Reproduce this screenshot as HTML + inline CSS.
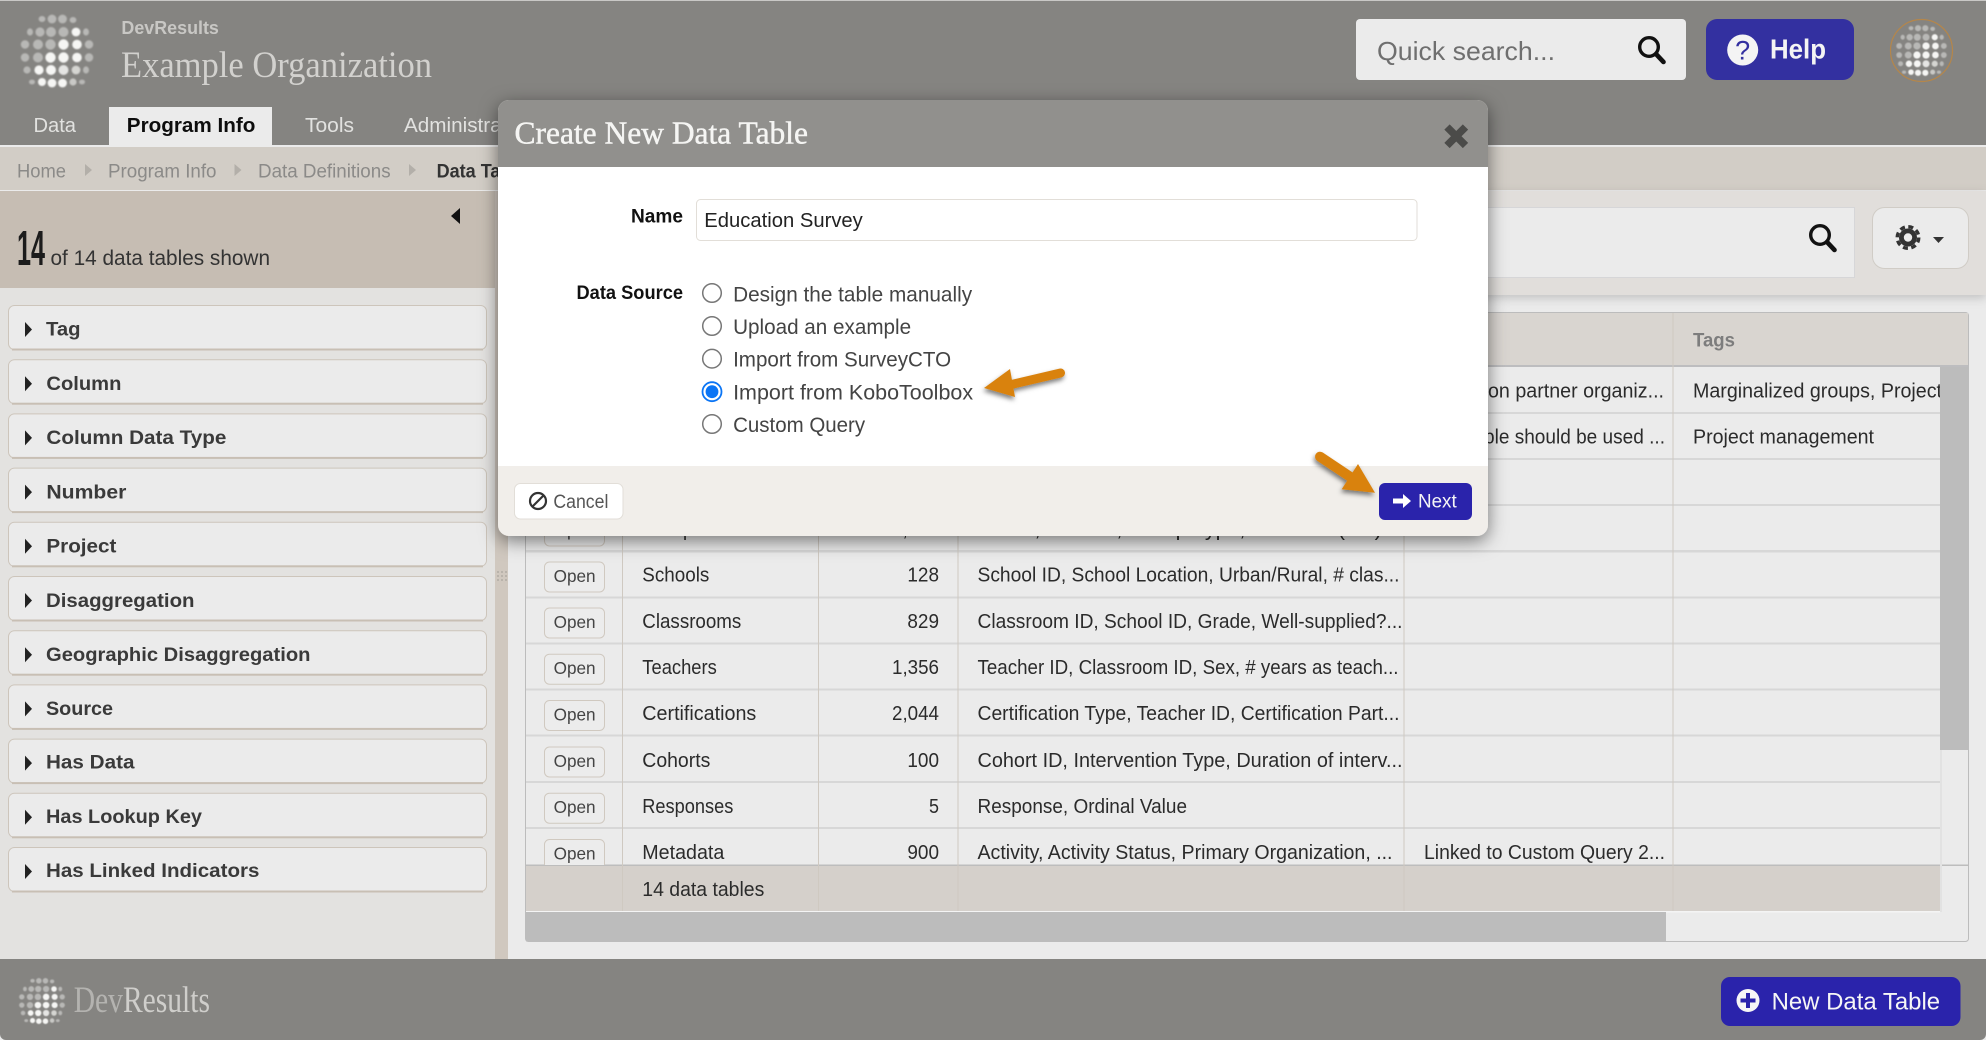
<!DOCTYPE html>
<html lang="en"><head><meta charset="utf-8"><title>Create New Data Table</title>
<style>
html,body{margin:0;padding:0;background:#ebebeb;width:1986px;height:1040px;overflow:hidden}
svg{display:block;position:absolute;left:0;top:0}
text{font-family:"Liberation Sans",Arial,sans-serif;white-space:pre}
.c{font-size:20px;fill:#2b2b2b}
.f{font-size:19.5px;font-weight:700;fill:#3a3a3a}
.o{font-size:17.5px;fill:#444}
.s{font-family:"Liberation Serif",serif}
.r{font-size:21px;fill:#444}
.b{font-size:19px;fill:#8b8a88}
.t{font-size:20px;fill:#e2e2e0}
</style></head><body>
<svg width="1986" height="1040" viewBox="0 0 1986 1040" xmlns="http://www.w3.org/2000/svg">
<defs>
<filter id="ms" x="-10%" y="-15%" width="120%" height="135%"><feDropShadow dx="0" dy="5" stdDeviation="9" flood-color="#000" flood-opacity=".5"/></filter>
<filter id="as" x="-30%" y="-30%" width="160%" height="170%"><feDropShadow dx="-1" dy="3" stdDeviation="2.5" flood-color="#000" flood-opacity=".5"/></filter>
<filter id="ts" x="-5%" y="-20%" width="110%" height="160%"><feDropShadow dx="0" dy="3" stdDeviation="5" flood-color="#000" flood-opacity=".18"/></filter>
<filter id="gb"><feGaussianBlur stdDeviation=".9"/></filter>
<symbol id="globe" viewBox="-38 -38 76 76">
<g filter="url(#gb)">
<g fill="#e8e8e6" opacity=".52">
<ellipse cx="-15" cy="-32" rx="3.4" ry="3"/><circle cx="-5" cy="-32" r="4.4"/><circle cx="5.5" cy="-32" r="4.4"/><ellipse cx="16" cy="-31" rx="3.4" ry="3"/>
<ellipse cx="-27" cy="-19" rx="3" ry="3.6"/><circle cx="-17" cy="-19" r="4.6"/><circle cx="-6" cy="-19" r="5"/><circle cx="6.5" cy="-19" r="5"/><ellipse cx="29" cy="-19" rx="3" ry="3.6"/>
<circle cx="-32" cy="-6.5" r="4.2"/><circle cx="-19" cy="-6.5" r="5"/><circle cx="-6.5" cy="-6.5" r="5.2"/><circle cx="32" cy="-6.5" r="4.2"/>
<circle cx="-32" cy="6.5" r="4.2"/><circle cx="-19" cy="6.5" r="5"/><circle cx="32" cy="6.5" r="4.2"/>
<circle cx="-30" cy="19" r="3.6"/><ellipse cx="29" cy="19" rx="3" ry="3.6"/><ellipse cx="-25" cy="31" rx="3" ry="2.4"/><ellipse cx="25" cy="31" rx="3" ry="2.4"/>
</g>
<g fill="#f6f6f4">
<circle cx="19" cy="-19" r="4.4"/>
<circle cx="6.5" cy="-6.5" r="5.2"/><circle cx="20" cy="-6.5" r="4.8"/>
<circle cx="-6.5" cy="6.5" r="5.2"/><circle cx="6.5" cy="6.5" r="5.2"/><circle cx="20" cy="6.5" r="4.8"/>
<circle cx="-18" cy="19" r="4.6"/><circle cx="-6" cy="19" r="5"/><circle cx="6.5" cy="19" r="5" opacity=".85"/><circle cx="19" cy="19" r="4.4" opacity=".7"/>
<circle cx="-15" cy="31" r="4"/><circle cx="-5" cy="32" r="4.4"/><circle cx="5.5" cy="32" r="4.4"/><circle cx="16" cy="31" r="3.6" opacity=".6"/>
</g>
</g>
</symbol>
<g id="srch"><circle cx="-3" cy="-3" r="9.3" fill="none" stroke="#111" stroke-width="3.4"/><line x1="4" y1="4" x2="11.5" y2="12" stroke="#111" stroke-width="4.6" stroke-linecap="round"/></g>
<g id="ob"><rect x="544.5" y="0.5" width="60" height="30" rx="5" fill="#ececec" stroke="#d0c9c0"/><text class="o" x="553.6" y="20.5" textLength="42" lengthAdjust="spacingAndGlyphs">Open</text></g>
<clipPath id="tc"><rect x="526" y="367" width="1414" height="498"/></clipPath>
</defs>

<!-- page backgrounds -->
<rect width="1986" height="1040" fill="#ebebeb"/>
<rect y="1" width="1986" height="144" fill="#858481"/>
<rect width="1986" height="1" fill="#c9c8c6"/>
<rect y="145" width="1986" height="2" fill="#ebebeb"/>
<rect y="147" width="1986" height="43" fill="#d2cdc6"/>
<rect y="190" width="1986" height="1" fill="#ebebeb"/>

<!-- app header -->
<use href="#globe" x="19" y="13" width="76" height="76"/>
<text x="121.4" y="34" font-size="18" font-weight="700" fill="#c8c7c4" textLength="97.5" lengthAdjust="spacingAndGlyphs">DevResults</text>
<text class="s" x="121" y="77" font-size="37" fill="#d2d1ce" textLength="311" lengthAdjust="spacingAndGlyphs">Example Organization</text>

<rect x="109" y="107" width="163" height="38" fill="#ebebeb"/>
<text class="t" x="33.5" y="132" textLength="42.5" lengthAdjust="spacingAndGlyphs">Data</text>
<text x="126.8" y="132" font-size="20" font-weight="700" fill="#0d0d0d" textLength="128.6" lengthAdjust="spacingAndGlyphs">Program Info</text>
<text class="t" x="305" y="132" textLength="49" lengthAdjust="spacingAndGlyphs">Tools</text>
<text class="t" x="404" y="132" textLength="131" lengthAdjust="spacingAndGlyphs">Administration</text>

<rect x="1356" y="19" width="330" height="61" rx="4" fill="#ebebeb"/>
<text x="1377" y="60" font-size="26" fill="#6f6f6f" textLength="178" lengthAdjust="spacingAndGlyphs">Quick search...</text>
<use href="#srch" transform="translate(1652,50)"/>
<rect x="1706" y="19" width="148" height="61" rx="11" fill="#3330a0"/>
<circle cx="1742.7" cy="50" r="15.5" fill="#f4f4f4"/>
<text x="1742.7" y="59.5" font-size="27" fill="#3330a0" text-anchor="middle">?</text>
<text x="1770" y="58.5" font-size="28" font-weight="700" fill="#f4f4f4" textLength="56" lengthAdjust="spacingAndGlyphs">Help</text>
<ellipse cx="1921.5" cy="50.5" rx="31" ry="31" fill="#858481" stroke="#b5864a" stroke-width="1.2"/>
<use href="#globe" x="1895" y="24" width="53" height="53"/>

<!-- breadcrumb -->
<text class="b" x="17" y="177.7" textLength="49" lengthAdjust="spacingAndGlyphs">Home</text>
<path d="M85 164l7 6-7 6z" fill="#b3afa9"/>
<text class="b" x="108" y="177.7" textLength="108.5" lengthAdjust="spacingAndGlyphs">Program Info</text>
<path d="M234.5 164l7 6-7 6z" fill="#b3afa9"/>
<text class="b" x="258" y="177.7" textLength="132.6" lengthAdjust="spacingAndGlyphs">Data Definitions</text>
<path d="M409 164l7 6-7 6z" fill="#b3afa9"/>
<text x="436.6" y="177.7" font-size="19" font-weight="700" fill="#333" textLength="100" lengthAdjust="spacingAndGlyphs">Data Tables</text>

<!-- sidebar -->
<rect y="191" width="495" height="97" fill="#c6bdb3"/>
<rect y="288" width="495" height="671" fill="#e3e2e0"/>
<rect x="495" y="191" width="13" height="768" fill="#d0c8bf"/>
<path d="M460 208v16l-9-8z" fill="#111"/>
<text x="17" y="265" font-size="49" font-weight="700" fill="#1c1c1c" textLength="28" lengthAdjust="spacingAndGlyphs">14</text>
<text x="50.5" y="265" font-size="21" fill="#333" textLength="219.5" lengthAdjust="spacingAndGlyphs">of 14 data tables shown</text>
<g fill="#b9b3ab"><rect x="497" y="571" width="2" height="2"/><rect x="501" y="571" width="2" height="2"/><rect x="505" y="571" width="2" height="2"/><rect x="497" y="575" width="2" height="2"/><rect x="501" y="575" width="2" height="2"/><rect x="505" y="575" width="2" height="2"/><rect x="497" y="579" width="2" height="2"/><rect x="501" y="579" width="2" height="2"/><rect x="505" y="579" width="2" height="2"/></g>

<g fill="#ebebeb" stroke="#cdc5bb" stroke-width="1">
<rect x="8.5" y="305.5" width="478" height="44" rx="6"/><rect x="8.5" y="359.7" width="478" height="44" rx="6"/><rect x="8.5" y="413.9" width="478" height="44" rx="6"/><rect x="8.5" y="468.1" width="478" height="44" rx="6"/><rect x="8.5" y="522.3" width="478" height="44" rx="6"/><rect x="8.5" y="576.5" width="478" height="44" rx="6"/><rect x="8.5" y="630.7" width="478" height="44" rx="6"/><rect x="8.5" y="684.9" width="478" height="44" rx="6"/><rect x="8.5" y="739.1" width="478" height="44" rx="6"/><rect x="8.5" y="793.3" width="478" height="44" rx="6"/><rect x="8.5" y="847.5" width="478" height="44" rx="6"/>
</g>
<g fill="#c8bfb4"><rect x="12" y="348.5" width="471" height="2"/><rect x="12" y="402.7" width="471" height="2"/><rect x="12" y="456.9" width="471" height="2"/><rect x="12" y="511.1" width="471" height="2"/><rect x="12" y="565.3" width="471" height="2"/><rect x="12" y="619.5" width="471" height="2"/><rect x="12" y="673.7" width="471" height="2"/><rect x="12" y="727.9" width="471" height="2"/><rect x="12" y="782.1" width="471" height="2"/><rect x="12" y="836.3" width="471" height="2"/><rect x="12" y="890.5" width="471" height="2"/></g>
<g fill="#222"><path d="M25 322l7 7.5-7 7.5z"/><path d="M25 376.2l7 7.5-7 7.5z"/><path d="M25 430.4l7 7.5-7 7.5z"/><path d="M25 484.6l7 7.5-7 7.5z"/><path d="M25 538.8l7 7.5-7 7.5z"/><path d="M25 593l7 7.5-7 7.5z"/><path d="M25 647.2l7 7.5-7 7.5z"/><path d="M25 701.4l7 7.5-7 7.5z"/><path d="M25 755.6l7 7.5-7 7.5z"/><path d="M25 809.8l7 7.5-7 7.5z"/><path d="M25 864l7 7.5-7 7.5z"/></g>
<text class="f" x="46" y="335.7" textLength="34.6" lengthAdjust="spacingAndGlyphs">Tag</text>
<text class="f" x="46.4" y="390" textLength="75" lengthAdjust="spacingAndGlyphs">Column</text>
<text class="f" x="46.4" y="444.2" textLength="180" lengthAdjust="spacingAndGlyphs">Column Data Type</text>
<text class="f" x="46.4" y="498.4" textLength="80" lengthAdjust="spacingAndGlyphs">Number</text>
<text class="f" x="46.4" y="552.6" textLength="70" lengthAdjust="spacingAndGlyphs">Project</text>
<text class="f" x="46" y="606.8" textLength="148.5" lengthAdjust="spacingAndGlyphs">Disaggregation</text>
<text class="f" x="46" y="661" textLength="264.5" lengthAdjust="spacingAndGlyphs">Geographic Disaggregation</text>
<text class="f" x="46" y="715" textLength="67" lengthAdjust="spacingAndGlyphs">Source</text>
<text class="f" x="46" y="768.7" textLength="88.5" lengthAdjust="spacingAndGlyphs">Has Data</text>
<text class="f" x="46" y="823" textLength="156" lengthAdjust="spacingAndGlyphs">Has Lookup Key</text>
<text class="f" x="46" y="877" textLength="213.4" lengthAdjust="spacingAndGlyphs">Has Linked Indicators</text>

<!-- toolbar -->
<rect x="508" y="191" width="1478" height="104" fill="#e1dedb" filter="url(#ts)"/>
<rect x="1000.5" y="207.5" width="854" height="70" fill="#ebebeb" stroke="#d6d6d8"/>
<use href="#srch" transform="translate(1823,238)"/>
<rect x="1872.5" y="207.5" width="96" height="61" rx="12" fill="#ebebeb" stroke="#d0ccc6"/>
<circle cx="1908" cy="237.5" r="9" fill="#333"/>
<circle cx="1908" cy="237.5" r="10.8" fill="none" stroke="#333" stroke-width="3.4" stroke-dasharray="5 3.48"/>
<circle cx="1908" cy="237.5" r="4.2" fill="#ebebeb"/>
<path d="M1933 237h11l-5.500 6z" fill="#333"/>

<!-- table -->
<rect x="525.5" y="312.5" width="1443" height="629" rx="3" fill="#ebebeb" stroke="#bcbcbc"/>
<rect x="526" y="313" width="1442" height="53" fill="#d9d5d0"/>
<rect x="526" y="365" width="1442" height="2" fill="#bdbdbf"/>
<g fill="#d7d7d7">
<rect x="526" y="412" width="1414" height="2"/><rect x="526" y="458" width="1414" height="2"/><rect x="526" y="504" width="1414" height="2"/><rect x="526" y="550" width="1414" height="2.5"/><rect x="526" y="596.5" width="1414" height="2"/><rect x="526" y="642.5" width="1414" height="2"/><rect x="526" y="688.5" width="1414" height="2"/><rect x="526" y="734.5" width="1414" height="2"/><rect x="526" y="781" width="1414" height="2"/><rect x="526" y="827" width="1414" height="2"/>
</g>
<rect x="526" y="866" width="1415" height="45" fill="#d5d0cb"/>
<rect x="526" y="864.5" width="1442" height="1.5" fill="#bdbdbd"/>
<rect x="526" y="911" width="1414" height="1.5" fill="#f4f4f4"/>
<g fill="#cfc9c1">
<rect x="622" y="313" width="1" height="598"/><rect x="818" y="313" width="1" height="598"/><rect x="957.5" y="313" width="1" height="598"/><rect x="1403.5" y="313" width="1" height="598"/><rect x="1672.5" y="313" width="1" height="598"/>
</g>
<text x="1693" y="346.7" font-size="19.5" font-weight="700" fill="#7d7d7d" textLength="42" lengthAdjust="spacingAndGlyphs">Tags</text>

<g clip-path="url(#tc)">
<text class="c" x="1488" y="397.7" textLength="176" lengthAdjust="spacingAndGlyphs">on partner organiz...</text>
<text class="c" x="1693" y="397.7" textLength="249" lengthAdjust="spacingAndGlyphs">Marginalized groups, Project</text>
<text class="c" x="1484" y="443.3" textLength="181" lengthAdjust="spacingAndGlyphs">ble should be used ...</text>
<text class="c" x="1693" y="443.3" textLength="181" lengthAdjust="spacingAndGlyphs">Project management</text>

<use href="#ob" transform="translate(0,515.5)"/>
<text class="c" x="642.3" y="536" textLength="60" lengthAdjust="spacingAndGlyphs">Groups</text>
<text class="c" x="892" y="536" textLength="47" lengthAdjust="spacingAndGlyphs">1,204</text>
<text class="c" x="977.5" y="536" textLength="422" lengthAdjust="spacingAndGlyphs">Name, Gender, Group Type, Location (m/f)...</text>

<use href="#ob" transform="translate(0,561.5)"/>
<text class="c" x="642.3" y="581.7" textLength="67" lengthAdjust="spacingAndGlyphs">Schools</text>
<text class="c" x="907.4" y="581.7" textLength="31.6" lengthAdjust="spacingAndGlyphs">128</text>
<text class="c" x="977.5" y="581.7" textLength="422" lengthAdjust="spacingAndGlyphs">School ID, School Location, Urban/Rural, # clas...</text>

<use href="#ob" transform="translate(0,607.5)"/>
<text class="c" x="642.3" y="627.8" textLength="99" lengthAdjust="spacingAndGlyphs">Classrooms</text>
<text class="c" x="907.4" y="627.8" textLength="31.6" lengthAdjust="spacingAndGlyphs">829</text>
<text class="c" x="977.5" y="627.8" textLength="425" lengthAdjust="spacingAndGlyphs">Classroom ID, School ID, Grade, Well-supplied?...</text>

<use href="#ob" transform="translate(0,653.7)"/>
<text class="c" x="642.3" y="674" textLength="74.5" lengthAdjust="spacingAndGlyphs">Teachers</text>
<text class="c" x="892" y="674" textLength="47" lengthAdjust="spacingAndGlyphs">1,356</text>
<text class="c" x="977.5" y="674" textLength="421" lengthAdjust="spacingAndGlyphs">Teacher ID, Classroom ID, Sex, # years as teach...</text>

<use href="#ob" transform="translate(0,700)"/>
<text class="c" x="642.3" y="720" textLength="114" lengthAdjust="spacingAndGlyphs">Certifications</text>
<text class="c" x="892" y="720" textLength="47" lengthAdjust="spacingAndGlyphs">2,044</text>
<text class="c" x="977.5" y="720" textLength="422" lengthAdjust="spacingAndGlyphs">Certification Type, Teacher ID, Certification Part...</text>

<use href="#ob" transform="translate(0,746.5)"/>
<text class="c" x="642.3" y="767" textLength="68" lengthAdjust="spacingAndGlyphs">Cohorts</text>
<text class="c" x="907.4" y="767" textLength="31.6" lengthAdjust="spacingAndGlyphs">100</text>
<text class="c" x="977.5" y="767" textLength="425" lengthAdjust="spacingAndGlyphs">Cohort ID, Intervention Type, Duration of interv...</text>

<use href="#ob" transform="translate(0,792.7)"/>
<text class="c" x="642.3" y="813" textLength="91" lengthAdjust="spacingAndGlyphs">Responses</text>
<text class="c" x="929" y="813" textLength="10" lengthAdjust="spacingAndGlyphs">5</text>
<text class="c" x="977.5" y="813" textLength="209.5" lengthAdjust="spacingAndGlyphs">Response, Ordinal Value</text>

<use href="#ob" transform="translate(0,839)"/>
<text class="c" x="642.3" y="859" textLength="82" lengthAdjust="spacingAndGlyphs">Metadata</text>
<text class="c" x="907.4" y="859" textLength="31.6" lengthAdjust="spacingAndGlyphs">900</text>
<text class="c" x="977.5" y="859" textLength="415" lengthAdjust="spacingAndGlyphs">Activity, Activity Status, Primary Organization, ...</text>
<text class="c" x="1424" y="859" textLength="241" lengthAdjust="spacingAndGlyphs">Linked to Custom Query 2...</text>
</g>
<text class="c" x="642.3" y="896" textLength="122" lengthAdjust="spacingAndGlyphs">14 data tables</text>

<rect x="1940" y="367" width="29" height="383" fill="#bcbcbc"/>
<rect x="1940" y="750" width="2" height="162" fill="#e2e2e2"/>
<rect x="526" y="912" width="1140" height="29.5" fill="#bcbcbc"/>

<!-- footer -->
<path d="M0 959H1986V1034a6 6 0 0 1-6 6H6a6 6 0 0 1-6-6z" fill="#858481"/>
<use href="#globe" x="18" y="977" width="48" height="48"/>
<text class="s" x="73.7" y="1012" font-size="37" fill="#cfcecb" textLength="136.3" lengthAdjust="spacingAndGlyphs"><tspan fill="#b4b3b0">Dev</tspan>Results</text>
<rect x="1721" y="977" width="239.5" height="49" rx="9" fill="#2a23ab"/>
<circle cx="1748" cy="1000.5" r="11.5" fill="#f6f6f6"/>
<path d="M1746 993h4v5.5h5.500v4h-5.500v5.500h-4v-5.500h-5.500v-4h5.500z" fill="#2a23ab"/>
<text x="1771.6" y="1009.3" font-size="24.5" fill="#f6f6f6" textLength="168.5" lengthAdjust="spacingAndGlyphs">New Data Table</text>

<!-- modal -->
<rect x="498" y="100" width="990" height="436" rx="11" fill="#f1eeea" filter="url(#ms)"/>
<path d="M498 167v-56a11 11 0 0 1 11-11h968a11 11 0 0 1 11 11v56z" fill="#91908d"/>
<rect x="498" y="167" width="990" height="299" fill="#fff"/>
<text class="s" x="514.5" y="143.3" font-size="32" fill="#f5f5f3" stroke="#f5f5f3" stroke-width=".45" textLength="293.5" lengthAdjust="spacingAndGlyphs">Create New Data Table</text>
<path d="M1447 127L1465.5 145.500M1465.500 127L1447 145.500" stroke="#4b4b49" stroke-width="7.500" fill="none"/>

<text x="631" y="222.7" font-size="19" font-weight="700" fill="#111" textLength="52" lengthAdjust="spacingAndGlyphs">Name</text>
<rect x="696.5" y="199.5" width="720.5" height="41" rx="4" fill="#fff" stroke="#e2ded8"/>
<text x="704.3" y="227" font-size="20.5" fill="#222" textLength="158.5" lengthAdjust="spacingAndGlyphs">Education Survey</text>
<text x="576.5" y="299" font-size="19" font-weight="700" fill="#111" textLength="106.5" lengthAdjust="spacingAndGlyphs">Data Source</text>

<g fill="#fff" stroke="#777" stroke-width="1.5">
<circle cx="712" cy="293" r="9.3"/><circle cx="712" cy="326" r="9.3"/><circle cx="712" cy="358.7" r="9.3"/><circle cx="712" cy="424" r="9.3"/>
</g>
<circle cx="712" cy="391.7" r="9.5" fill="#fff" stroke="#0b75f5" stroke-width="1.8"/>
<circle cx="712" cy="391.7" r="6.4" fill="#0b75f5"/>
<text class="r" x="733.1" y="301.5" textLength="239" lengthAdjust="spacingAndGlyphs">Design the table manually</text>
<text class="r" x="733.1" y="334" textLength="178" lengthAdjust="spacingAndGlyphs">Upload an example</text>
<text class="r" x="733.1" y="366.5" textLength="218" lengthAdjust="spacingAndGlyphs">Import from SurveyCTO</text>
<text class="r" x="733.1" y="399.3" textLength="240" lengthAdjust="spacingAndGlyphs">Import from KoboToolbox</text>
<text class="r" x="733.1" y="432" textLength="132" lengthAdjust="spacingAndGlyphs">Custom Query</text>

<rect x="514.5" y="483.5" width="108.5" height="35.5" rx="6" fill="#fff" stroke="#e2ded8"/>
<circle cx="538" cy="501" r="8" fill="none" stroke="#333" stroke-width="2.2"/>
<line x1="532.5" y1="506.5" x2="543.5" y2="495.5" stroke="#333" stroke-width="2.2"/>
<text x="553.4" y="507.8" font-size="19" fill="#555" textLength="55" lengthAdjust="spacingAndGlyphs">Cancel</text>

<rect x="1379" y="483" width="93" height="37" rx="6" fill="#2a23ab"/>
<path d="M1393 498.500h10v-4.500l8 7-8 7v-4.500h-10z" fill="#fff"/>
<text x="1418" y="507.7" font-size="19" fill="#f6f6f6" textLength="38.7" lengthAdjust="spacingAndGlyphs">Next</text>

<!-- annotation arrows -->
<g filter="url(#as)">
<path d="M1060.500 373L1005 386" stroke="#d9820f" stroke-width="9" stroke-linecap="round" fill="none"/>
<path d="M984 388L1010 369L1015 397z" fill="#d9820f"/>
</g>
<g filter="url(#as)">
<path d="M1320 456.700L1352 478" stroke="#d9820f" stroke-width="10" stroke-linecap="round" fill="none"/>
<path d="M1375 492.700L1358 464L1341.700 489.300z" fill="#d9820f"/>
</g>
</svg>
</body></html>
